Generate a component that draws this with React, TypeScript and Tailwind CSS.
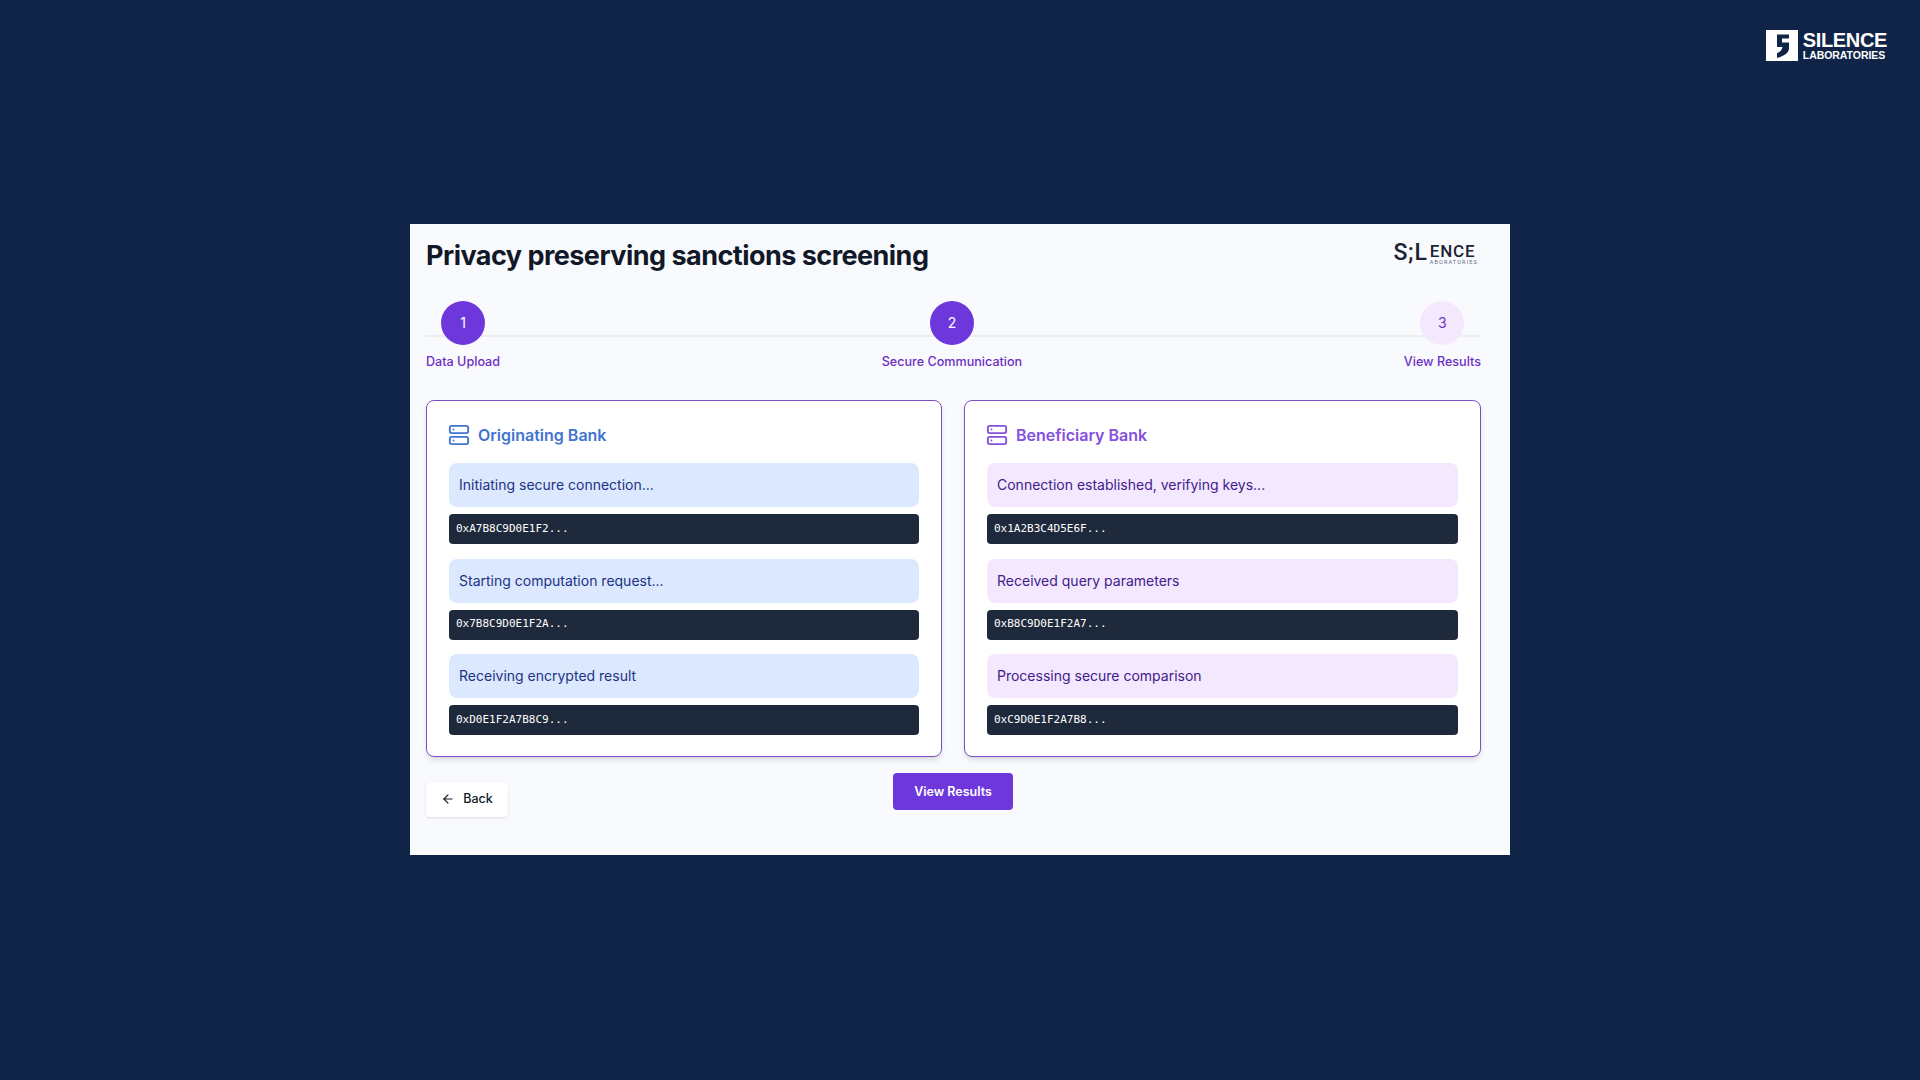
import { ArrowLeft, Server } from "lucide-react";

const steps = [
  { num: 1, label: "Data Upload", active: true },
  { num: 2, label: "Secure Communication", active: true },
  { num: 3, label: "View Results", active: false },
];

const banks = [
  {
    name: "Originating Bank",
    titleColor: "text-[#4273cf]",
    msgBg: "bg-[#dbe8fe]",
    msgText: "text-[#1b3385]",
    rows: [
      ["Initiating secure connection...", "0xA7B8C9D0E1F2..."],
      ["Starting computation request...", "0x7B8C9D0E1F2A..."],
      ["Receiving encrypted result", "0xD0E1F2A7B8C9..."],
    ],
  },
  {
    name: "Beneficiary Bank",
    titleColor: "text-[#8450dc]",
    msgBg: "bg-[#f3e8fe]",
    msgText: "text-[#431a8c]",
    rows: [
      ["Connection established, verifying keys...", "0x1A2B3C4D5E6F..."],
      ["Received query parameters", "0xB8C9D0E1F2A7..."],
      ["Processing secure comparison", "0xC9D0E1F2A7B8..."],
    ],
  },
];

function SilenceMark() {
  return (
    <svg width="32" height="31" viewBox="0 0 32 31" className="shrink-0">
      <rect width="32" height="31" fill="#ffffff" />
      <path d="M11 4.5H23V8.5H16V12.5H23V18C23 23 18 26 11 28V23C14 22 16 20 16.5 17H11Z" fill="#0f2447" />
    </svg>
  );
}

export default function App() {
  return (
    <div className="relative flex min-h-screen items-center justify-center bg-[#0f2447] font-['Inter',sans-serif]">
      <div className="absolute right-[33px] top-[30px] flex items-center gap-[5px] text-white font-['Liberation_Sans',sans-serif]">
        <SilenceMark />
        <div className="flex flex-col font-bold">
          <span className="text-[20px] leading-[19px] tracking-[-0.35px]">SILENCE</span>
          <span className="text-[10.5px] leading-[11px] tracking-[-0.05px]">LABORATORIES</span>
        </div>
      </div>

      <div className="mb-[1px] h-[631px] w-[1100px] bg-[#f9fafd] pl-4 pr-[29px]">
        <div className="flex h-[77px] items-start justify-between">
          <h1 className="mt-[14px] text-[27px] leading-9 font-bold tracking-[-0.53px] text-[#111827]">
            Privacy preserving sanctions screening
          </h1>
          <div className="mr-[3px] mt-[17px] flex items-start font-['Roboto',sans-serif] text-[#1c2434]">
            <span className="text-[23px] font-medium leading-[23px] tracking-[0.8px]">S;L</span>
            <div className="ml-[2px] mt-[1px] flex flex-col">
              <span className="text-[17px] font-medium leading-[18px] tracking-[0.9px]">ENCE</span>
              <span className="mt-[-1px] text-[5.5px] leading-[6px] tracking-[1.15px] text-[#5f6b80]">ABORATORIES</span>
            </div>
          </div>
        </div>

        <div className="relative flex justify-between">
          <div className="absolute left-0 right-0 top-[34px] h-[2px] bg-[#eceef2]" />
          {steps.map((s) => (
            <div key={s.num} className="relative flex flex-col items-center">
              <div
                className={
                  s.active
                    ? "flex h-11 w-11 items-center justify-center rounded-full bg-[#6d37dc] text-sm text-white"
                    : "flex h-11 w-11 items-center justify-center rounded-full bg-[#f3e8fe] text-sm text-[#6d37c4]"
                }
              >
                {s.num}
              </div>
              <span className="mt-[9px] text-[12.6px] font-medium leading-4 text-[#6d2fc4]">{s.label}</span>
            </div>
          ))}
        </div>

        <div className="mt-[30px] grid grid-cols-[516px_1fr] gap-[22px]">
          {banks.map((bank) => (
            <div
              key={bank.name}
              className="h-[357px] rounded-lg border border-[#7e4fc4] bg-white px-[22px] pt-[20px] shadow-md"
            >
              <div className="-ml-[1px] flex h-[28px] items-center gap-2">
                <Server size={22} className={bank.titleColor} />
                <h2 className={`text-base font-semibold ${bank.titleColor}`}>{bank.name}</h2>
              </div>
              <div className="mt-[14px] flex flex-col gap-[14.5px]">
                {bank.rows.map(([msg, code]) => (
                  <div key={code} className="flex flex-col gap-[7px]">
                    <div className={`flex h-11 items-center rounded-lg px-[10px] text-sm ${bank.msgBg} ${bank.msgText}`}>
                      {msg}
                    </div>
                    <div className="flex h-[30px] items-center rounded bg-[#1e293b] px-[7px] font-['DejaVu_Sans_Mono',monospace] text-[11px] text-white">
                      {code}
                    </div>
                  </div>
                ))}
              </div>
            </div>
          ))}
        </div>

        <div className="mt-4 flex items-start justify-between">
          <button className="mt-[9px] flex h-[35px] w-[82px] items-center justify-center gap-2 rounded bg-white text-[12.5px] font-medium text-[#111827] shadow-sm">
            <ArrowLeft size={14} className="-mt-[2px]" />
            Back
          </button>
          <button className="h-[37px] w-[120px] rounded bg-[#6d37dc] pt-[2px] text-[12.5px] font-semibold text-white">
            View Results
          </button>
          <div className="w-[83px]" />
        </div>
      </div>
    </div>
  );
}
